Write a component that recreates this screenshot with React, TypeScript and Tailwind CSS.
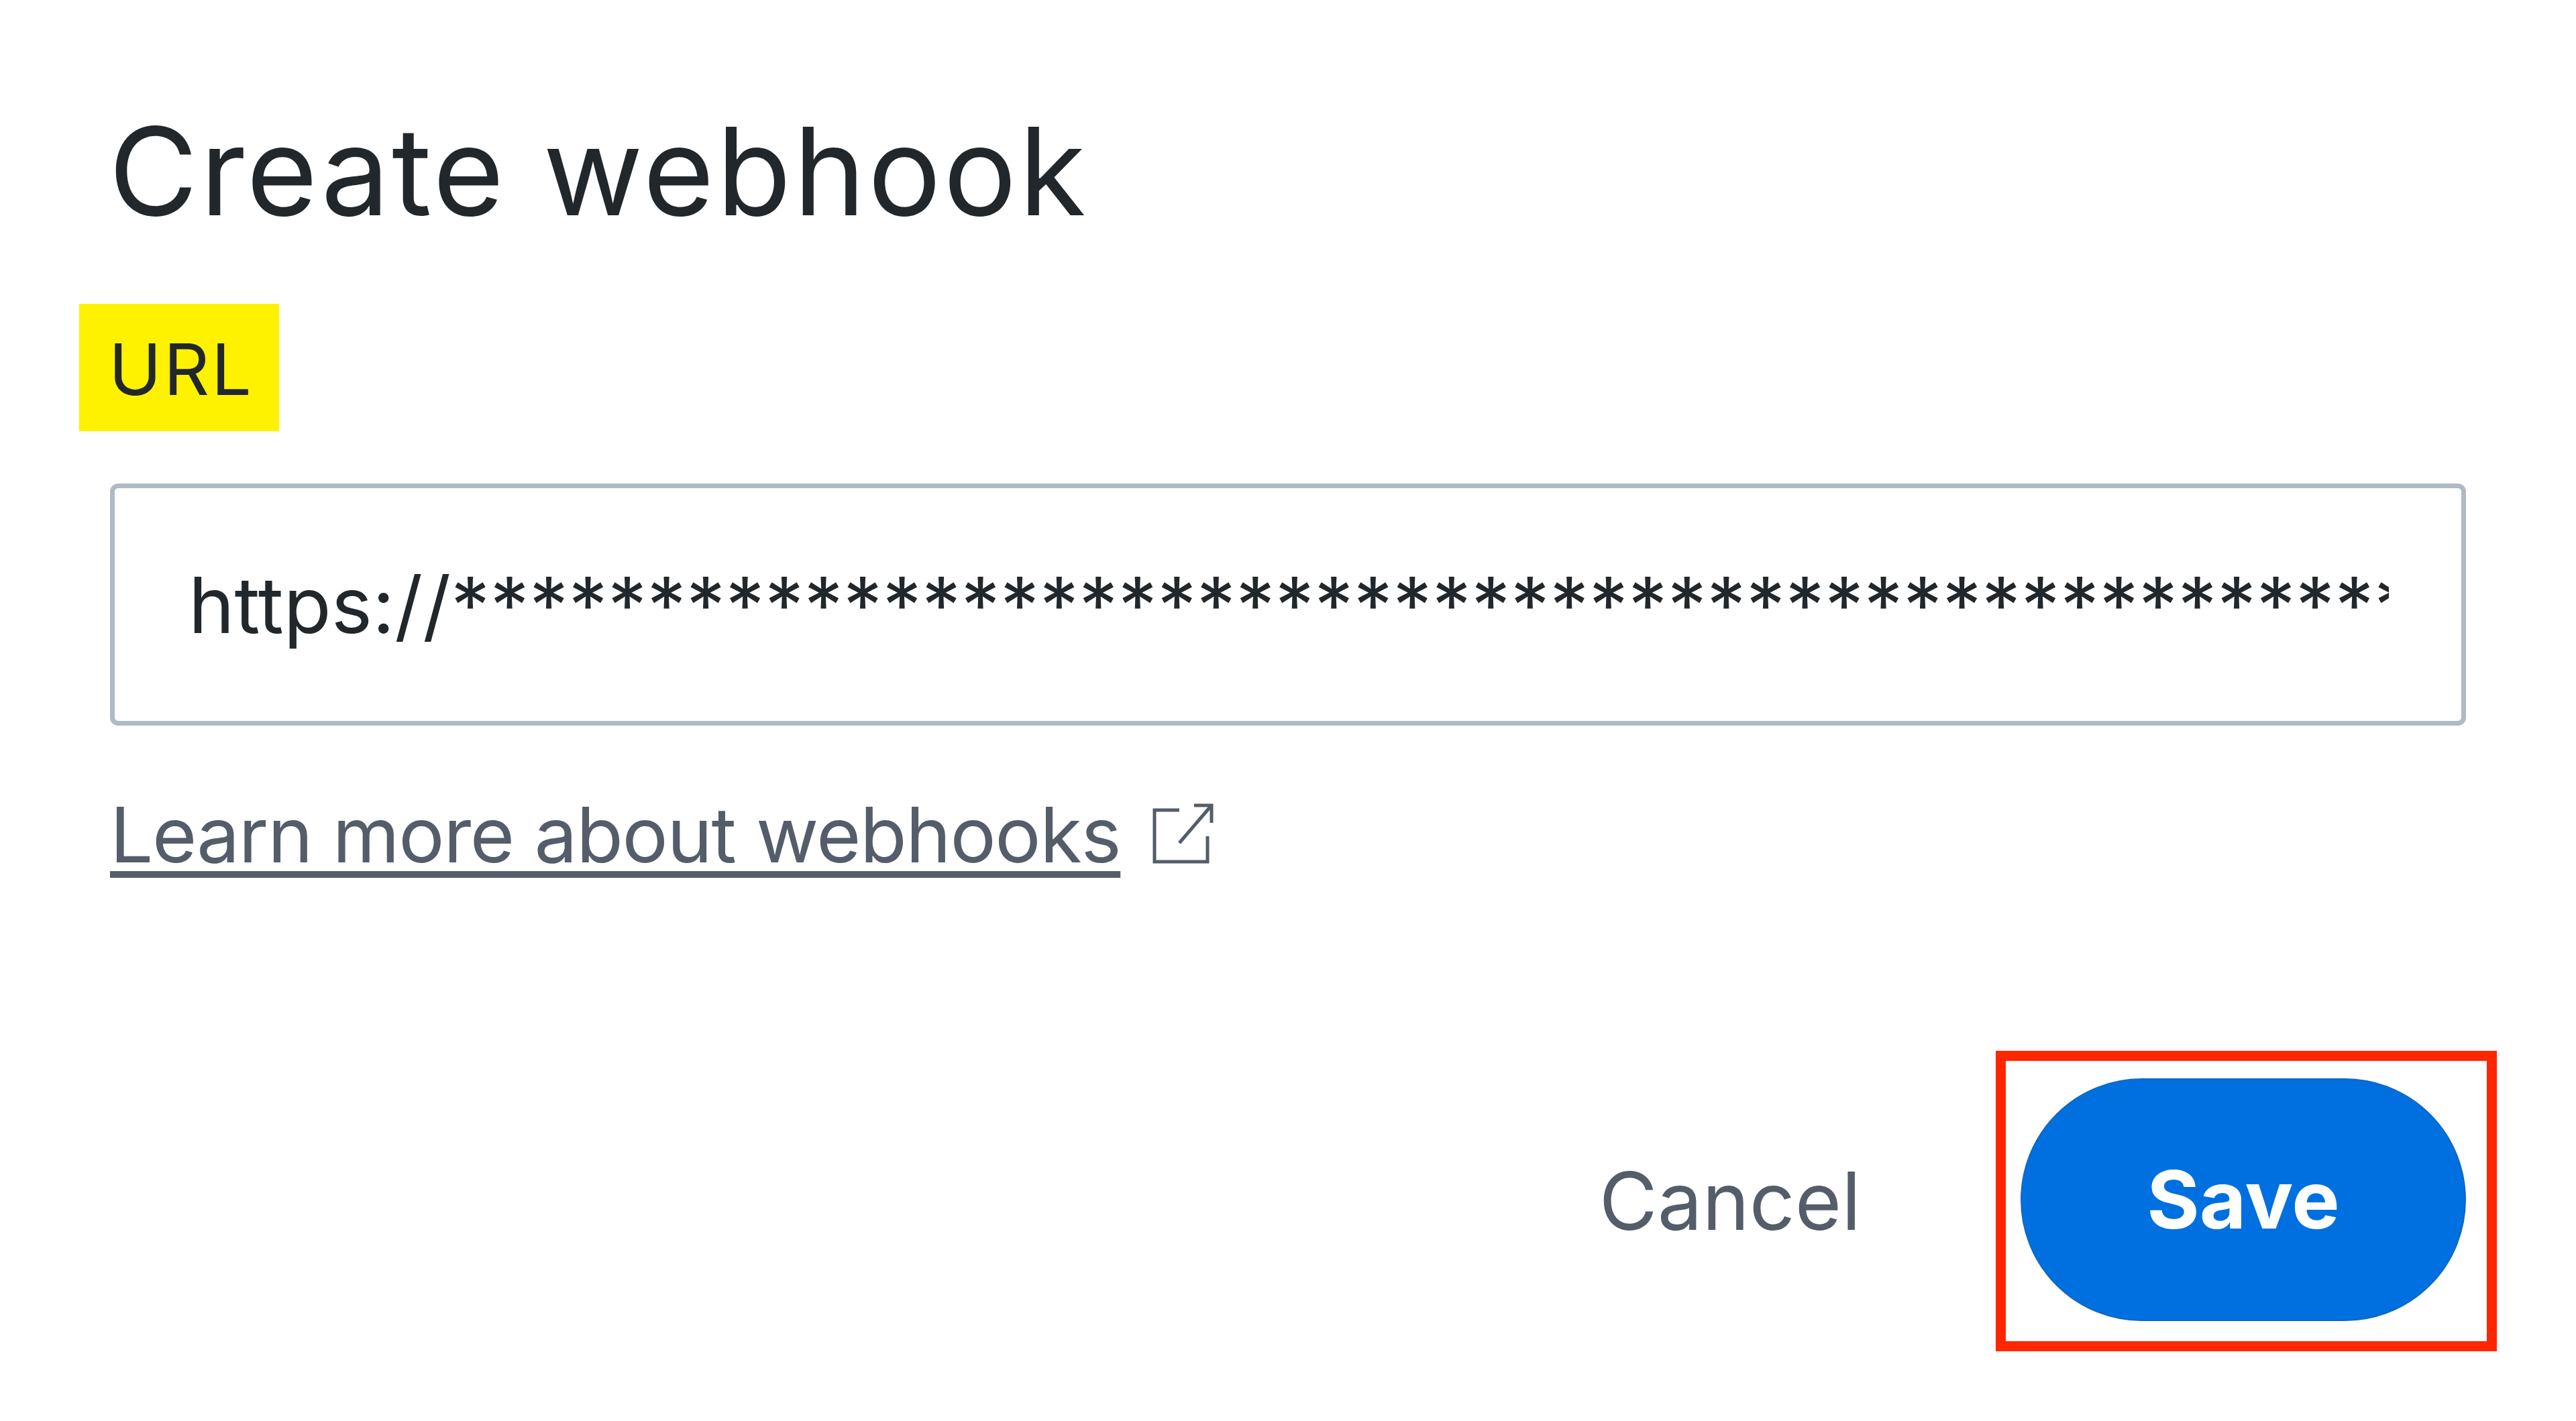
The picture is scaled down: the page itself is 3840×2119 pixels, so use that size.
const stars = "*".repeat(70);

function ExternalIcon() {
  return (
    <svg width="92" height="92" viewBox="0 0 92 92" fill="none" stroke="#545d69" strokeWidth="5" className="ml-[48px] mt-[-4px] shrink-0">
      <path d="M40 11H3V88H82V50" />
      <path d="M62 4H88V30" />
      <path d="M88 4L40 60" />
    </svg>
  );
}

export default function App() {
  return (
    <div className="w-[3840px] h-[2119px] bg-white px-[164px] relative flex flex-col font-['Inter',sans-serif] overflow-hidden">
      <h1 className="mt-[145px] ml-[-2px] text-[182px] leading-[220px] font-normal text-[#22272b] tracking-[3.4px] whitespace-nowrap">Create webhook</h1>
      <div className="mt-[88px] ml-[-46px] self-start h-[190px] w-[298px] bg-[#fff200] flex items-center pl-[44px] pt-[6px]">
        <span className="text-[106px] leading-none text-[#22272b] tracking-[3px]">URL</span>
      </div>
      <div className="mt-[78px] h-[361px] w-[3512px] border-[7px] border-[#b0bac5] rounded-[12px] bg-white flex items-center pl-[110px] pr-[108px]">
        <div className="overflow-hidden whitespace-nowrap text-[116px] leading-[140px] text-[#22272b] flex-1">https://<span className="tracking-[0.4px]">{stars}</span></div>
      </div>
      <a className="mt-[98px] self-start flex items-center text-[114px] leading-[130px] text-[#545d69] tracking-[-1.4px]">
        <span className="underline decoration-[10px] underline-offset-[13px] whitespace-nowrap">Learn more about webhooks</span>
        <ExternalIcon />
      </a>
      <div className="mt-auto mb-[104px] flex items-center justify-end mr-[-46px]">
        <span className="text-[119px] leading-none text-[#545d69] mr-[201px]">Cancel</span>
        <div className="border-[15px] border-[#ff2600] pl-[22px] pr-[31px] pt-[26px] pb-[30px]">
          <button className="w-[664px] h-[362px] rounded-[181px] bg-[#0070e0] border-[2px] border-[#1267c2] text-white text-[120px] font-bold flex items-center justify-center">Save</button>
        </div>
      </div>
    </div>
  );
}
